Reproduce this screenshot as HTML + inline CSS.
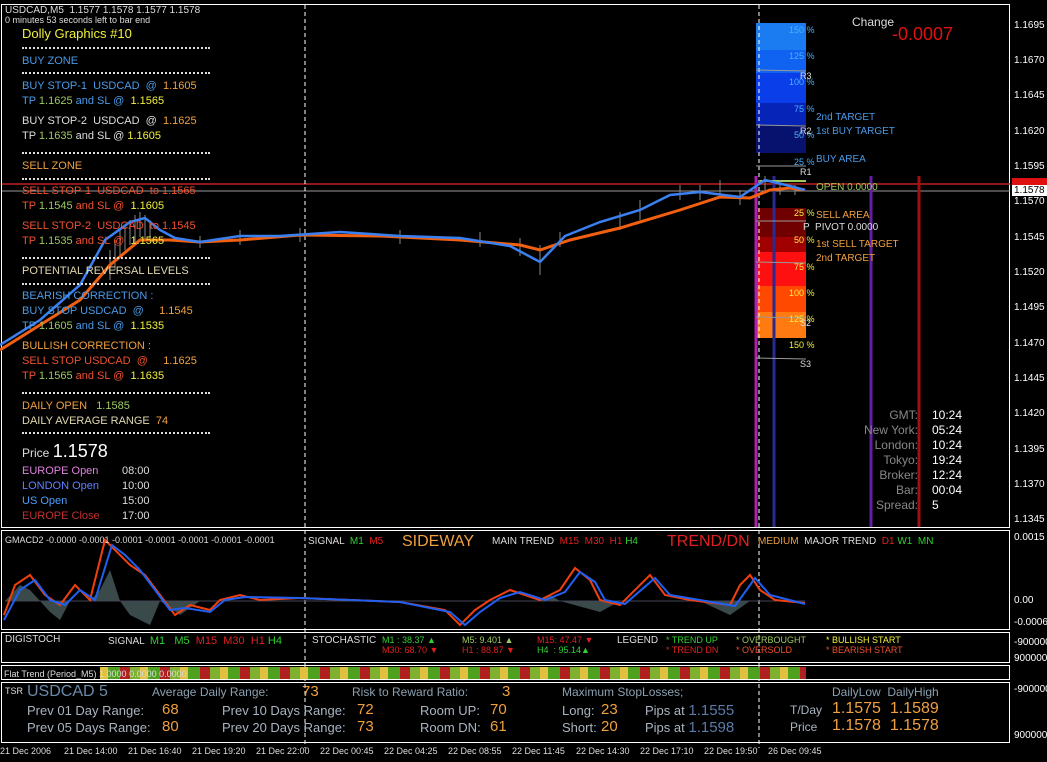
<!DOCTYPE html>
<html><head><meta charset="utf-8"><style>
*{margin:0;padding:0;box-sizing:border-box}
body{width:1047px;height:762px;background:#000;position:relative;overflow:hidden;font-family:"Liberation Sans",sans-serif;font-size:11px;color:#ddd}
.t{position:absolute;white-space:nowrap;line-height:1}
.d{position:absolute;left:22px;width:188px;border-top:2px dotted #ddd;height:0}
.b{position:absolute;left:756px;width:50px}
.ax{position:absolute;left:1014px;font-size:10px;color:#fff;white-space:nowrap}
.p{position:absolute;border:1px solid #fff}
.y{color:#f0f040}.o{color:#f0a040}.bl{color:#4a9ae8}.g{color:#9ec860}.w{color:#ddd}.r{color:#f05030}.gr{color:#30d030}.rd{color:#e02020}
</style></head><body>
<div class="p" style="left:1px;top:4px;width:1009px;height:524px"></div>
<div class="p" style="left:1px;top:530px;width:1009px;height:100px"></div>
<div class="p" style="left:1px;top:632px;width:1009px;height:31px"></div>
<div class="p" style="left:1px;top:665px;width:1009px;height:15px"></div>
<div class="p" style="left:1px;top:682px;width:1009px;height:61px"></div>

<div class="b" style="top:23px;height:27px;background:#1a7cf0"></div>
<div class="b" style="top:50px;height:23px;background:#1062f0"></div>
<div class="b" style="top:73px;height:30px;background:#0a3ee8"></div>
<div class="b" style="top:103px;height:22px;background:#0624b8"></div>
<div class="b" style="top:125px;height:28px;background:#06126e"></div>
<div class="b" style="top:208px;height:29px;background:#700000"></div>
<div class="b" style="top:237px;height:15px;background:#a00000"></div>
<div class="b" style="top:252px;height:34px;background:#ff1010"></div>
<div class="b" style="top:286px;height:26px;background:#ff4800"></div>
<div class="b" style="top:312px;height:26px;background:#ff7a10"></div>

<svg style="position:absolute;left:0;top:0" width="1047" height="762">
<line x1="2" y1="184" x2="1010" y2="184" stroke="#c02020" stroke-width="1.5"/>
<line x1="2" y1="191" x2="1010" y2="191" stroke="#999"/>
<line x1="756" y1="176" x2="756" y2="527" stroke="#b020b0" stroke-width="3"/>
<line x1="774" y1="176" x2="774" y2="527" stroke="#2a2a90" stroke-width="3"/>
<line x1="871" y1="176" x2="871" y2="527" stroke="#6020a0" stroke-width="3"/>
<line x1="919" y1="176" x2="919" y2="527" stroke="#a01010" stroke-width="3"/>
<line x1="759" y1="5" x2="759" y2="748" stroke="#fff" stroke-dasharray="4,3"/>
<line x1="305" y1="5" x2="305" y2="748" stroke="#fff" stroke-dasharray="4,3"/>
<g stroke="#999"><line x1="756" y1="70" x2="806" y2="71"/><line x1="756" y1="125" x2="806" y2="126"/><line x1="756" y1="166" x2="806" y2="166"/><line x1="756" y1="221" x2="806" y2="221"/><line x1="756" y1="262" x2="806" y2="263"/><line x1="756" y1="317" x2="806" y2="318"/><line x1="756" y1="358" x2="806" y2="359"/></g>
<line x1="760" y1="181" x2="806" y2="181" stroke="#9ec860" stroke-width="2"/>
<!-- bar ticks -->
<g stroke="#888" stroke-width="1">
<path d="M110,250v30M115,240v30M120,230v25M125,225v25M130,220v25M135,215v30M140,212v25M145,215v25M150,220v20M200,236v12M240,230v15M300,228v14M400,230v14M480,232v15M520,238v18M540,245v30M560,232v15M620,212v18M640,200v20M680,185v15M700,185v15M720,180v15M740,190v15M765,176v15M780,180v15M795,185v10"/>
</g>
<polyline fill="none" stroke="#f06010" stroke-width="3" points="0,350 40,325 80,300 110,265 140,240 170,240 200,242 240,240 300,235 380,236 460,240 520,245 540,250 570,240 620,228 680,210 720,197 750,198 770,190 790,188 805,190"/>
<polyline fill="none" stroke="#3a80f0" stroke-width="2.5" points="0,345 40,320 80,285 105,240 130,222 145,218 160,230 175,238 200,242 240,236 280,236 340,232 400,236 460,238 510,246 540,262 565,236 600,222 640,210 670,195 700,192 740,197 765,180 790,186 805,190"/>
<!-- macd hist -->
<path d="M5,601 L20,585 L30,590 L40,601 L50,612 L60,620 L70,601 L90,601 L100,590 L110,570 L120,601 L130,615 L150,625 L160,601 L180,615 L200,601 L300,601 L540,601 L550,595 L560,601 L600,612 L620,601 L700,601 L730,615 L750,601 L805,601 Z" fill="#3a4a4a"/>
<line x1="5" y1="601" x2="805" y2="601" stroke="#445"/>
<polyline fill="none" stroke="#f04010" stroke-width="2" points="4,615 15,585 30,575 45,595 60,605 75,585 90,600 105,540 115,550 130,565 145,575 160,595 175,615 190,605 210,610 220,600 240,595 260,600 300,598 400,602 445,610 460,625 475,610 490,600 510,590 540,600 560,590 575,568 590,580 600,600 620,605 650,575 665,595 690,600 730,605 740,585 750,575 760,590 775,600 805,603"/>
<polyline fill="none" stroke="#2060f0" stroke-width="2" points="4,620 20,590 35,580 50,600 65,605 80,590 95,600 112,545 125,555 140,570 155,590 170,610 185,608 210,612 225,600 245,597 300,598 400,602 450,612 465,625 480,612 500,598 520,592 545,600 565,592 580,572 595,582 605,600 625,604 655,578 670,595 700,600 735,606 748,588 755,578 770,595 805,604"/>
<defs><pattern id="ft" width="40" height="10" patternUnits="userSpaceOnUse"><rect width="10" height="10" fill="#b02020"/><rect x="10" width="10" height="10" fill="#80b030"/><rect x="20" width="8" height="10" fill="#e0c040"/><rect x="28" width="12" height="10" fill="#50a020"/></pattern></defs>
<rect x="100" y="667" width="706" height="12" fill="url(#ft)"/>
</svg>

<div class="t w" style="left:5px;top:6px;font-size:10px">USDCAD,M5 &nbsp;1.1577 1.1578 1.1577 1.1578</div>
<div class="t w" style="left:5px;top:16px;font-size:9px">0 minutes 53 seconds left to bar end</div>
<div class="t y" style="left:22px;top:27px;font-size:13px">Dolly Graphics #10</div>
<div class="d" style="top:47px"></div>
<div class="t bl" style="left:22px;top:56px">BUY ZONE</div>
<div class="d" style="top:72px"></div>
<div class="t" style="left:22px;top:81px"><span class="bl">BUY STOP-1 &nbsp;USDCAD &nbsp;@ &nbsp;</span><span class="o">1.1605</span></div>
<div class="t" style="left:22px;top:96px"><span class="bl">TP </span><span class="g">1.1625</span><span class="bl"> and SL @ &nbsp;</span><span class="y">1.1565</span></div>
<div class="t" style="left:22px;top:116px"><span class="w">BUY STOP-2 &nbsp;USDCAD &nbsp;@ &nbsp;</span><span class="o">1.1625</span></div>
<div class="t" style="left:22px;top:131px"><span class="w">TP </span><span class="g">1.1635</span><span class="w"> and SL @ </span><span class="y">1.1605</span></div>
<div class="d" style="top:152px"></div>
<div class="t o" style="left:22px;top:161px">SELL ZONE</div>
<div class="d" style="top:178px"></div>
<div class="t" style="left:22px;top:186px"><span class="r">SELL STOP-1 &nbsp;USDCAD &nbsp;to 1.1565</span></div>
<div class="t" style="left:22px;top:201px"><span class="r">TP </span><span class="g">1.1545</span><span class="r"> and SL @ &nbsp;</span><span class="y">1.1605</span></div>
<div class="t" style="left:22px;top:221px"><span class="r">SELL STOP-2 &nbsp;USDCAD &nbsp;to 1.1545</span></div>
<div class="t" style="left:22px;top:236px"><span class="r">TP </span><span class="g">1.1535</span><span class="r"> and SL @ &nbsp;</span><span class="y">1.1565</span></div>
<div class="d" style="top:257px"></div>
<div class="t" style="left:22px;top:266px;color:#e0d8b0">POTENTIAL REVERSAL LEVELS</div>
<div class="d" style="top:283px"></div>
<div class="t bl" style="left:22px;top:291px">BEARISH CORRECTION :</div>
<div class="t" style="left:22px;top:306px"><span class="bl">BUY STOP USDCAD &nbsp;@ &nbsp; &nbsp; </span><span class="o">1.1545</span></div>
<div class="t" style="left:22px;top:321px"><span class="bl">TP </span><span class="g">1.1605</span><span class="bl"> and SL @ &nbsp;</span><span class="y">1.1535</span></div>
<div class="t o" style="left:22px;top:341px">BULLISH CORRECTION :</div>
<div class="t" style="left:22px;top:356px"><span class="r">SELL STOP USDCAD &nbsp;@ &nbsp; &nbsp; </span><span class="o">1.1625</span></div>
<div class="t" style="left:22px;top:371px"><span class="r">TP </span><span class="g">1.1565</span><span class="r"> and SL @ &nbsp;</span><span class="y">1.1635</span></div>
<div class="d" style="top:392px"></div>
<div class="t" style="left:22px;top:401px"><span class="o">DAILY OPEN &nbsp; </span><span class="g">1.1585</span></div>
<div class="t" style="left:22px;top:416px"><span style="color:#e0d8b0">DAILY AVERAGE RANGE &nbsp;</span><span class="o">74</span></div>
<div class="d" style="top:432px"></div>
<div class="t w" style="left:22px;top:442px;font-size:12px">Price <span style="font-size:18px;color:#fff">1.1578</span></div>
<div class="t" style="left:22px;top:466px;color:#e080e0">EUROPE Open<span class="w" style="position:absolute;left:100px">08:00</span></div>
<div class="t" style="left:22px;top:481px;color:#6080ff">LONDON Open<span class="w" style="position:absolute;left:100px">10:00</span></div>
<div class="t" style="left:22px;top:496px;color:#4aa0ff">US Open<span class="w" style="position:absolute;left:100px">15:00</span></div>
<div class="t" style="left:22px;top:511px;color:#c03030">EUROPE Close<span class="w" style="position:absolute;left:100px">17:00</span></div>

<div class="t w" style="left:852px;top:16px;font-size:12px">Change</div>
<div class="t" style="left:892px;top:25px;font-size:18px;color:#e01010">-0.0007</div>
<div style="position:absolute;left:756px;top:26px;width:60px;font-size:9px;line-height:1;color:#4ab0ff">
<div class="t" style="left:33px;top:0">150 %</div><div class="t" style="left:33px;top:26px">125 %</div><div class="t" style="left:33px;top:52px">100 %</div><div class="t" style="left:38px;top:79px">75 %</div><div class="t" style="left:38px;top:105px">50 %</div><div class="t" style="left:38px;top:132px">25 %</div></div>
<div class="t w" style="left:800px;top:72px;font-size:9px">R3</div>
<div class="t w" style="left:800px;top:127px;font-size:9px">R2</div>
<div class="t w" style="left:800px;top:168px;font-size:9px">R1</div>
<div class="t bl" style="left:816px;top:113px;font-size:10px">2nd TARGET</div>
<div class="t bl" style="left:816px;top:127px;font-size:10px">1st BUY TARGET</div>
<div class="t bl" style="left:816px;top:155px;font-size:10px">BUY AREA</div>
<div class="t g" style="left:816px;top:183px;font-size:10px">OPEN 0.0000</div>
<div style="position:absolute;left:756px;top:209px;font-size:9px;line-height:1;color:#f0f040">
<div class="t" style="left:38px;top:0">25 %</div><div class="t" style="left:38px;top:27px">50 %</div><div class="t" style="left:38px;top:54px">75 %</div><div class="t" style="left:33px;top:80px">100 %</div><div class="t" style="left:33px;top:106px">125 %</div><div class="t" style="left:33px;top:132px">150 %</div></div>
<div class="t o" style="left:816px;top:211px;font-size:10px">SELL AREA</div>
<div class="t w" style="left:803px;top:223px;font-size:10px">P &nbsp;PIVOT 0.0000</div>
<div class="t o" style="left:816px;top:240px;font-size:10px">1st SELL TARGET</div>
<div class="t o" style="left:816px;top:254px;font-size:10px">2nd TARGET</div>
<div class="t w" style="left:800px;top:319px;font-size:9px">S2</div>
<div class="t w" style="left:800px;top:360px;font-size:9px">S3</div>

<div style="position:absolute;left:840px;top:408px;width:78px;text-align:right;font-size:12px;line-height:15px;color:#888">GMT:<br>New York:<br>London:<br>Tokyo:<br>Broker:<br>Bar:<br>Spread:</div>
<div style="position:absolute;left:932px;top:408px;font-size:12px;line-height:15px;color:#fff">10:24<br>05:24<br>10:24<br>19:24<br>12:24<br>00:04<br>5</div>

<div class="ax" style="top:20px">1.1695</div><div class="ax" style="top:55px">1.1670</div><div class="ax" style="top:90px">1.1645</div><div class="ax" style="top:126px">1.1620</div><div class="ax" style="top:161px">1.1595</div><div class="ax" style="top:196px">1.1570</div><div class="ax" style="top:232px">1.1545</div><div class="ax" style="top:267px">1.1520</div><div class="ax" style="top:302px">1.1495</div><div class="ax" style="top:338px">1.1470</div><div class="ax" style="top:373px">1.1445</div><div class="ax" style="top:408px">1.1420</div><div class="ax" style="top:444px">1.1395</div><div class="ax" style="top:479px">1.1370</div><div class="ax" style="top:514px">1.1345</div>
<div class="ax" style="top:178px;left:1012px;background:#e01010;width:35px;height:8px"></div>
<div class="ax" style="top:185px;left:1012px;background:#fff;color:#000;width:35px;padding-left:2px">1.1578</div>
<div class="ax" style="top:532px">0.0015</div><div class="ax" style="top:595px">0.00</div><div class="ax" style="top:617px">-0.0006</div>
<div class="ax" style="top:637px">-9000000</div><div class="ax" style="top:653px">9000000</div><div class="ax" style="top:684px">-9000000</div><div class="ax" style="top:730px">9000000</div>

<div class="t w" style="left:5px;top:536px;font-size:9px">GMACD2 -0.0000 -0.0001 -0.0001 -0.0001 -0.0001 -0.0001 -0.0001</div>
<div class="t" style="left:308px;top:537px;font-size:10px"><span class="w">SIGNAL &nbsp;</span><span class="gr">M1</span> &nbsp;<span class="rd">M5</span></div>
<div class="t o" style="left:402px;top:534px;font-size:16px">SIDEWAY</div>
<div class="t" style="left:492px;top:537px;font-size:10px"><span class="w">MAIN TREND &nbsp;</span><span class="rd">M15 &nbsp;M30 &nbsp;H1 </span> <span class="gr">H4</span></div>
<div class="t rd" style="left:667px;top:534px;font-size:16px">TREND/DN</div>
<div class="t" style="left:758px;top:537px;font-size:10px"><span class="o">MEDIUM</span> &nbsp;<span class="w">MAJOR TREND &nbsp;</span><span class="rd">D1</span> <span class="gr">W1 &nbsp;MN</span></div>
<div class="t w" style="left:5px;top:635px;font-size:10px">DIGISTOCH</div>
<div class="t" style="left:108px;top:636px;font-size:11px"><span class="w" style="font-size:10px">SIGNAL &nbsp;</span><span class="gr">M1 &nbsp; M5</span> &nbsp;<span class="rd">M15 &nbsp;M30</span> &nbsp;<span class="rd">H1</span> <span class="gr">H4</span></div>
<div class="t w" style="left:312px;top:636px;font-size:10px">STOCHASTIC</div>
<div class="t" style="left:382px;top:635px;font-size:9px;line-height:10px"><span class="gr">M1 : 38.37 ▲</span><br><span class="rd">M30: 68.70 ▼</span></div>
<div class="t" style="left:462px;top:635px;font-size:9px;line-height:10px"><span class="g">M5: 9.401 ▲</span><br><span class="rd">H1 : 88.87 ▼</span></div>
<div class="t" style="left:537px;top:635px;font-size:9px;line-height:10px"><span class="rd">M15: 47.47 ▼</span><br><span class="gr">H4 &nbsp;: 95.14▲</span></div>
<div class="t w" style="left:617px;top:636px;font-size:10px">LEGEND</div>
<div class="t" style="left:666px;top:635px;font-size:9px;line-height:10px"><span class="gr">* TREND UP</span><br><span class="rd">* TREND DN</span></div>
<div class="t" style="left:736px;top:635px;font-size:9px;line-height:10px"><span class="g">* OVERBOUGHT</span><br><span class="r">* OVERSOLD</span></div>
<div class="t" style="left:826px;top:635px;font-size:9px;line-height:10px"><span class="y">* BULLISH START</span><br><span class="r">* BEARISH START</span></div>
<div class="t w" style="left:4px;top:670px;font-size:9px">Flat Trend (Period_M5) 1.0000 0.0000 0.0000</div>
<div class="t w" style="left:5px;top:687px;font-size:9px">TSR</div>
<div class="t" style="left:27px;top:684px;font-size:16px;color:#6a8aa8">USDCAD 5</div>
<div class="t" style="left:152px;top:686px;font-size:12px;color:#8aa0b0">Average Daily Range:</div><div class="t o" style="left:302px;top:684px;font-size:15px">73</div>
<div class="t" style="left:352px;top:686px;font-size:12px;color:#8aa0b0">Risk to Reward Ratio:</div><div class="t o" style="left:502px;top:684px;font-size:15px">3</div>
<div class="t" style="left:562px;top:686px;font-size:12px;color:#8aa0b0">Maximum StopLosses;</div>
<div class="t" style="left:832px;top:686px;font-size:12px;color:#8aa0b0">DailyLow &nbsp;DailyHigh</div>
<div style="position:absolute;left:27px;top:702px;font-size:13px;line-height:17px;color:#aab4c0">Prev 01 Day Range:<br>Prev 05 Days Range:</div>
<div style="position:absolute;left:162px;top:701px;font-size:15px;line-height:17px" class="o">68<br>80</div>
<div style="position:absolute;left:222px;top:702px;font-size:13px;line-height:17px;color:#aab4c0">Prev 10 Days Range:<br>Prev 20 Days Range:</div>
<div style="position:absolute;left:357px;top:701px;font-size:15px;line-height:17px" class="o">72<br>73</div>
<div style="position:absolute;left:420px;top:702px;font-size:13px;line-height:17px;color:#aab4c0">Room UP:<br>Room DN:</div>
<div style="position:absolute;left:490px;top:701px;font-size:15px;line-height:17px" class="o">70<br>61</div>
<div style="position:absolute;left:562px;top:702px;font-size:13px;line-height:17px;color:#aab4c0">Long:<br>Short:</div>
<div style="position:absolute;left:601px;top:701px;font-size:15px;line-height:17px" class="o">23<br>20</div>
<div style="position:absolute;left:645px;top:702px;font-size:13px;line-height:17px;color:#aab4c0">Pips at <span style="color:#5a7aa8;font-size:15px">1.1555</span><br>Pips at <span style="color:#5a7aa8;font-size:15px">1.1598</span></div>
<div style="position:absolute;left:790px;top:702px;font-size:12px;line-height:17px;color:#aab4c0">T/Day<br>Price</div>
<div style="position:absolute;left:832px;top:700px;font-size:16px;line-height:17px" class="o">1.1575 &nbsp;1.1589<br>1.1578 &nbsp;1.1578</div>
<div class="t w" style="left:0;top:747px;font-size:9px">21 Dec 2006</div>
<div class="t w" style="left:64px;top:747px;font-size:9px">21 Dec 14:00</div>
<div class="t w" style="left:128px;top:747px;font-size:9px">21 Dec 16:40</div>
<div class="t w" style="left:192px;top:747px;font-size:9px">21 Dec 19:20</div>
<div class="t w" style="left:256px;top:747px;font-size:9px">21 Dec 22:00</div>
<div class="t w" style="left:320px;top:747px;font-size:9px">22 Dec 00:45</div>
<div class="t w" style="left:384px;top:747px;font-size:9px">22 Dec 04:25</div>
<div class="t w" style="left:448px;top:747px;font-size:9px">22 Dec 08:55</div>
<div class="t w" style="left:512px;top:747px;font-size:9px">22 Dec 11:45</div>
<div class="t w" style="left:576px;top:747px;font-size:9px">22 Dec 14:30</div>
<div class="t w" style="left:640px;top:747px;font-size:9px">22 Dec 17:10</div>
<div class="t w" style="left:704px;top:747px;font-size:9px">22 Dec 19:50</div>
<div class="t w" style="left:768px;top:747px;font-size:9px">26 Dec 09:45</div>
</body></html>
